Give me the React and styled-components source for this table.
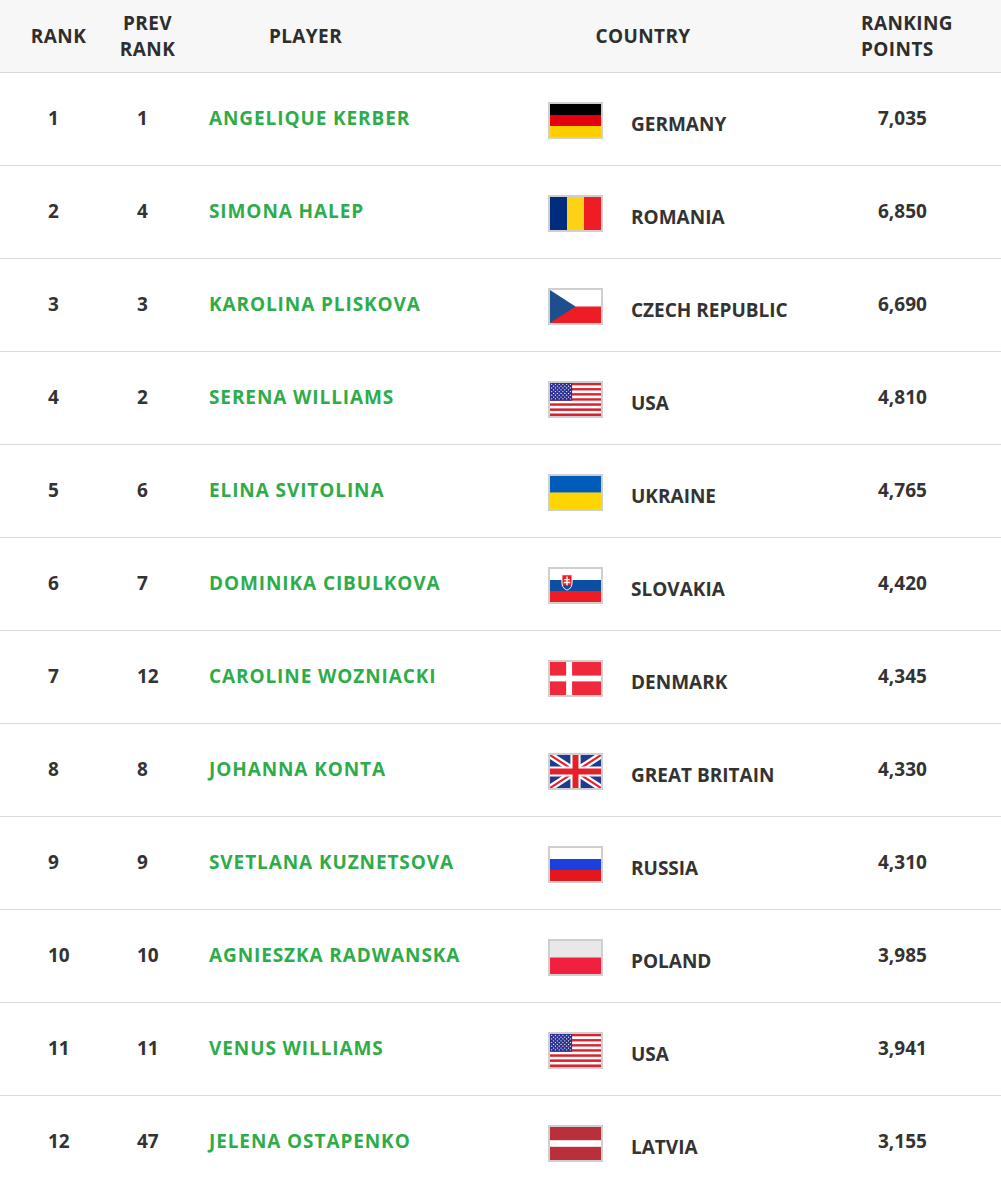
import React from 'react'
import styled, { createGlobalStyle } from 'styled-components'

const GlobalStyle = createGlobalStyle`
  html, body {
    margin: 0;
    padding: 0;
    background: #fff;
  }
  body {
    font-family: "Open Sans", "Liberation Sans", sans-serif;
    color: #333;
  }
`

const players = [
  { rank: 1, prev: 1, name: 'Angelique Kerber', country: 'Germany', flag: 'de', points: '7,035' },
  { rank: 2, prev: 4, name: 'Simona Halep', country: 'Romania', flag: 'ro', points: '6,850' },
  { rank: 3, prev: 3, name: 'Karolina Pliskova', country: 'Czech Republic', flag: 'cz', points: '6,690' },
  { rank: 4, prev: 2, name: 'Serena Williams', country: 'USA', flag: 'us', points: '4,810' },
  { rank: 5, prev: 6, name: 'Elina Svitolina', country: 'Ukraine', flag: 'ua', points: '4,765' },
  { rank: 6, prev: 7, name: 'Dominika Cibulkova', country: 'Slovakia', flag: 'sk', points: '4,420' },
  { rank: 7, prev: 12, name: 'Caroline Wozniacki', country: 'Denmark', flag: 'dk', points: '4,345' },
  { rank: 8, prev: 8, name: 'Johanna Konta', country: 'Great Britain', flag: 'gb', points: '4,330' },
  { rank: 9, prev: 9, name: 'Svetlana Kuznetsova', country: 'Russia', flag: 'ru', points: '4,310' },
  { rank: 10, prev: 10, name: 'Agnieszka Radwanska', country: 'Poland', flag: 'pl', points: '3,985' },
  { rank: 11, prev: 11, name: 'Venus Williams', country: 'USA', flag: 'us', points: '3,941' },
  { rank: 12, prev: 47, name: 'Jelena Ostapenko', country: 'Latvia', flag: 'lv', points: '3,155' },
]

function Stripes({ colors, vertical }) {
  const n = colors.length
  return colors.map((c, i) =>
    vertical
      ? <rect key={i} x={(60 / n) * i} y="0" width={60 / n + 0.5} height="40" fill={c} />
      : <rect key={i} x="0" y={(40 / n) * i} width="60" height={40 / n + 0.5} fill={c} />
  )
}

function UsFlag() {
  const stripes = []
  for (let i = 0; i < 13; i++) {
    stripes.push(<rect key={i} x="0" y={(40 / 13) * i} width="60" height={40 / 13 + 0.1} fill={i % 2 ? '#fff' : '#d7232f'} />)
  }
  const stars = []
  for (let r = 0; r < 9; r++) {
    const count = r % 2 ? 5 : 6
    for (let c = 0; c < count; c++) {
      stars.push(<circle key={r + '-' + c} cx={2 + c * 4.4 + (r % 2 ? 2.2 : 0)} cy={1.6 + r * 2.2} r="0.75" fill="#fff" />)
    }
  }
  return (
    <>
      {stripes}
      <rect x="0" y="0" width="26" height="21.5" fill="#2a2f8f" />
      {stars}
    </>
  )
}

function FlagArt({ code }) {
  switch (code) {
    case 'de':
      return <Stripes colors={['#000', '#e2000f', '#ffce00']} />
    case 'ro':
      return <Stripes vertical colors={['#002b7f', '#fcd116', '#ee1c25']} />
    case 'cz':
      return (
        <>
          <rect x="0" y="0" width="60" height="20" fill="#fff" />
          <rect x="0" y="20" width="60" height="20" fill="#ee1c25" />
          <polygon points="0,0 30,20 0,40" fill="#1d4f8f" />
        </>
      )
    case 'us':
      return <UsFlag />
    case 'ua':
      return <Stripes colors={['#005bbb', '#ffd500']} />
    case 'sk':
      return (
        <>
          <Stripes colors={['#fff', '#0b4ea2', '#ee1c25']} />
          <path d="M14 7 h12 v9 c0 5 -3 8 -6 9.5 c-3 -1.5 -6 -4.5 -6 -9.5 z" fill="#ee1c25" stroke="#fff" strokeWidth="1.2" />
          <path d="M19.2 9 h1.6 v3 h2.5 v1.6 h-2.5 v2 h3 v1.6 h-3 v3 h-1.6 v-3 h-3 v-1.6 h3 v-2 h-2.5 v-1.6 h2.5 z" fill="#fff" />
          <path d="M15.5 21 c1.5 -2 3 -2 4.5 -0.5 c1.5 -1.5 3 -1.5 4.5 0.5 c-1 1.8 -2.7 3 -4.5 4 c-1.8 -1 -3.5 -2.2 -4.5 -4 z" fill="#0b4ea2" />
        </>
      )
    case 'dk':
      return (
        <>
          <rect x="0" y="0" width="60" height="40" fill="#f0283c" />
          <rect x="19" y="0" width="7" height="40" fill="#fff" />
          <rect x="0" y="16.5" width="60" height="7" fill="#fff" />
        </>
      )
    case 'gb':
      return (
        <>
          <rect x="0" y="0" width="60" height="40" fill="#1b3c8f" />
          <path d="M0 0 L60 40 M60 0 L0 40" stroke="#fff" strokeWidth="8" />
          <path d="M0 0 L60 40 M60 0 L0 40" stroke="#e4202c" strokeWidth="2.6" />
          <path d="M30 0 V40 M0 20 H60" stroke="#fff" strokeWidth="12" />
          <path d="M30 0 V40 M0 20 H60" stroke="#e4202c" strokeWidth="7" />
        </>
      )
    case 'ru':
      return <Stripes colors={['#fff', '#1c3fe0', '#e4181c']} />
    case 'pl':
      return <Stripes colors={['#e8e8e8', '#f0203e']} />
    case 'lv':
      return (
        <>
          <rect x="0" y="0" width="60" height="40" fill="#b9303a" />
          <rect x="0" y="16" width="60" height="8" fill="#fff" />
        </>
      )
    default:
      return null
  }
}

function Flag({ code }) {
  return (
    <FlagFrame>
      <svg width="51" height="33" viewBox="0 0 60 40" preserveAspectRatio="none">
        <FlagArt code={code} />
      </svg>
    </FlagFrame>
  )
}

function App() {
  return (
    <>
      <GlobalStyle />
      <Table>
        <HeadRow>
          <HeadCell>Rank</HeadCell>
          <HeadCell>Prev<br />Rank</HeadCell>
          <HeadCell>Player</HeadCell>
          <HeadCell>Country</HeadCell>
          <HeadCell $align="left" $pad="8px">Ranking<br />Points</HeadCell>
        </HeadRow>
        {players.map(p => (
          <Row key={p.rank}>
            <Cell $pad="48px">{p.rank}</Cell>
            <Cell $pad="20px">{p.prev}</Cell>
            <PlayerCell>{p.name}</PlayerCell>
            <CountryCell>
              <Flag code={p.flag} />
              <CountryName>{p.country}</CountryName>
            </CountryCell>
            <Cell $pad="25px">{p.points}</Cell>
          </Row>
        ))}
      </Table>
    </>
  )
}

export default App

const columns = '117px 61px 255px 420px 1fr'

const Table = styled.div`
  width: 1001px;
  font-weight: 700;
  font-size: 19px;
  text-transform: uppercase;
  white-space: nowrap;
`

const HeadRow = styled.div`
  display: grid;
  grid-template-columns: ${columns};
  align-items: center;
  height: 72px;
  background: #f7f7f7;
  border-bottom: 1px solid #d8d8d8;
`

const HeadCell = styled.div`
  text-align: ${p => p.$align || 'center'};
  padding-left: ${p => p.$pad || '0'};
  line-height: 26px;
  color: #2e2e2e;
  letter-spacing: 0.4px;
`

const Row = styled.div`
  display: grid;
  grid-template-columns: ${columns};
  align-items: center;
  height: 92px;
  border-bottom: 1px solid #dcdcdc;
`

const Cell = styled.div`
  padding-left: ${p => p.$pad};
  padding-bottom: 2px;
  color: #333;
`

const PlayerCell = styled.div`
  padding-left: 31px;
  padding-bottom: 2px;
  color: #2eac4a;
  letter-spacing: 0.9px;
`

const CountryCell = styled.div`
  display: flex;
  align-items: center;
  padding-left: 115px;
`

const FlagFrame = styled.div`
  display: flex;
  border: 2px solid #cfcfcf;
  margin-top: 2px;
`

const CountryName = styled.span`
  margin-left: 28px;
  padding-top: 10px;
  color: #333;
  letter-spacing: 0;
`
